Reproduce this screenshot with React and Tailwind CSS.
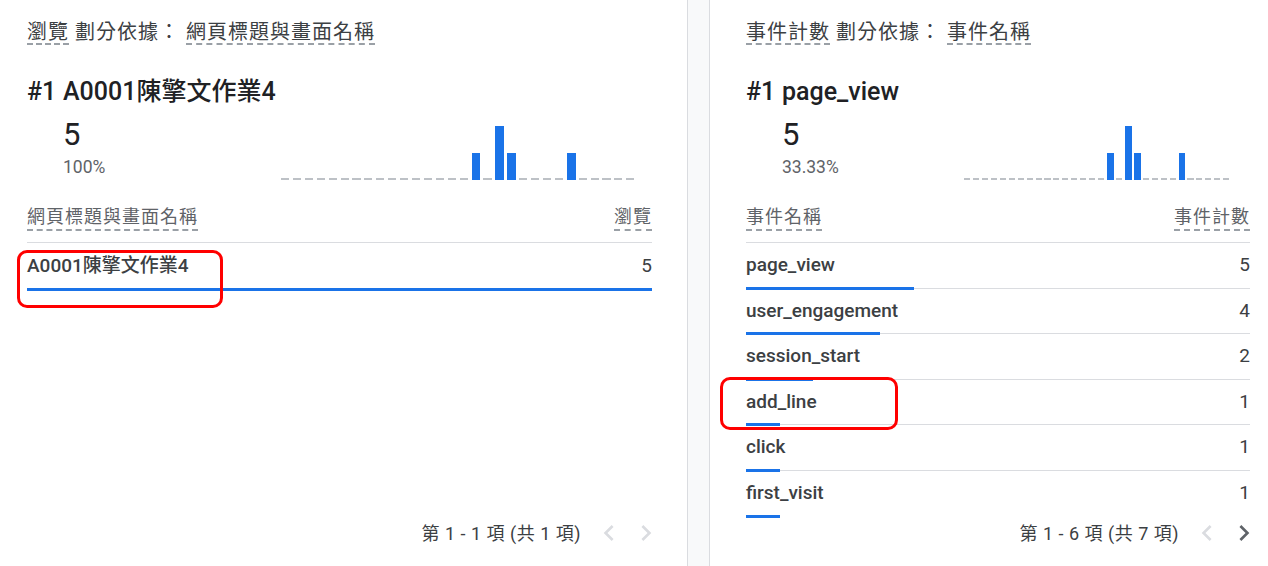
import { Fragment } from "react"

const SLOTS = 30
const bars = { 16: "short", 18: "tall", 19: "short", 24: "short" }

function Chevron({ dir, enabled }) {
  const d =
    dir === "left"
      ? "M15.41 7.41 14 6l-6 6 6 6 1.41-1.41L10.83 12z"
      : "M10 6 8.59 7.41 13.17 12l-4.58 4.59L10 18l6-6z"
  return (
    <div className="flex h-[32px] w-[32px] items-center justify-center">
      <svg width="32" height="32" viewBox="0 0 24 24" className={enabled ? "fill-[#5f6368]" : "fill-[#dadce0]"}>
        <path d={d} />
      </svg>
    </div>
  )
}

function Sparkline({ className }) {
  return (
    <div className={`flex h-[54px] items-end ${className}`}>
      {Array.from({ length: SLOTS }).map((_, i) => (
        <div key={i} className="flex h-full flex-1 items-end">
          {bars[i] === "tall" && <div className="h-[54px] w-[75%] bg-[#1a73e8]" />}
          {bars[i] === "short" && <div className="h-[27px] w-[75%] bg-[#1a73e8]" />}
          {!bars[i] && <div className="h-[2px] w-[68%] bg-[#bdc1c6]" />}
        </div>
      ))}
    </div>
  )
}

function Dashed({ children, className = "" }) {
  return <span className={`inline-block border-b-2 border-dashed border-[#9aa0a6] ${className}`}>{children}</span>
}

function Panel({ metric, dimension, top, topValue, topPct, colHead, rows, total, range, nextEnabled, padClass, numColClass, chartClass }) {
  return (
    <div className={`flex h-[566px] flex-col bg-white ${padClass}`}>
      <div className="pt-[17px] text-[20px] tracking-[1px] text-[#3c4043]">
        <Dashed className="h-[24px] leading-[22px]">{metric}</Dashed>
        <span className="leading-[22px]"> 劃分依據： </span>
        <Dashed className="h-[24px] leading-[22px]">{dimension}</Dashed>
      </div>

      <div className="mt-[30px] flex h-[30px] items-center text-[25px] font-medium leading-[30px] text-[#202124]">
        <span className="w-[36px]">#1</span>
        <span>{top}</span>
      </div>

      <div className="mt-[10px] flex h-[63px] items-end">
        <div className={`ml-[36px] flex h-full flex-col ${numColClass}`}>
          <div className="text-[31px] leading-[36px] text-[#202124]">{topValue}</div>
          <div className="mt-[3px] text-[17.5px] leading-[22px] text-[#5f6368]">{topPct}</div>
        </div>
        <Sparkline className={chartClass} />
      </div>

      <div className="mt-[25px] flex justify-between border-b border-[#dadce0] pb-[11px] text-[18px] tracking-[1px] text-[#5f6368]">
        <Dashed className="h-[26px] leading-[24px]">{colHead[0]}</Dashed>
        <Dashed className="h-[26px] leading-[24px]">{colHead[1]}</Dashed>
      </div>

      {rows.map((r, i) => (
        <Fragment key={r.name}>
          <div
            className={`relative flex h-[45.5px] items-center justify-between text-[19px] text-[#3c4043] ${i < rows.length - 1 ? "border-b border-[#dadce0]" : ""}`}
          >
            <span className="font-medium">{r.name}</span>
            <span>{r.value}</span>
            <div className="absolute bottom-[-2px] left-0 h-[3px] bg-[#1a73e8]" style={{ width: `${(r.value / total) * 100}%` }} />
          </div>
        </Fragment>
      ))}

      <div className="mt-auto -mr-[10px] flex items-center justify-end pb-[17px] text-[18px] tracking-[0.5px] text-[#3c4043]">
        <span>{range}</span>
        <div className="ml-[12px]">
          <Chevron dir="left" enabled={false} />
        </div>
        <div className="ml-[5px]">
          <Chevron dir="right" enabled={nextEnabled} />
        </div>
      </div>
    </div>
  )
}

export default function App() {
  return (
    <div className="relative flex h-[566px] w-[1268px] overflow-hidden bg-white font-['Roboto','Noto_Sans_CJK_TC',sans-serif]">
      <div className="w-[687px] shrink-0">
        <Panel
          metric="瀏覽"
          dimension="網頁標題與畫面名稱"
          top="A0001陳擎文作業4"
          topValue="5"
          topPct="100%"
          colHead={["網頁標題與畫面名稱", "瀏覽"]}
          rows={[{ name: "A0001陳擎文作業4", value: 5 }]}
          total={5}
          range="第 1 - 1 項 (共 1 項)"
          nextEnabled={false}
          padClass="pl-[27px] pr-[35px]"
          numColClass="w-[218px]"
          chartClass="w-[357px]"
        />
      </div>

      <div className="w-[23px] shrink-0 border-x border-[#dadce0] bg-[#f8f9fa]" />

      <div className="flex-1">
        <Panel
          metric="事件計數"
          dimension="事件名稱"
          top="page_view"
          topValue="5"
          topPct="33.33%"
          colHead={["事件名稱", "事件計數"]}
          rows={[
            { name: "page_view", value: 5 },
            { name: "user_engagement", value: 4 },
            { name: "session_start", value: 2 },
            { name: "add_line", value: 1 },
            { name: "click", value: 1 },
            { name: "first_visit", value: 1 },
          ]}
          total={15}
          range="第 1 - 6 項 (共 7 項)"
          nextEnabled={true}
          padClass="pl-[36px] pr-[18px]"
          numColClass="w-[182px]"
          chartClass="w-[268px]"
        />
      </div>

      {/* annotation boxes */}
      <div className="pointer-events-none absolute left-[17px] top-[250px] h-[58px] w-[206px] rounded-[10px] border-[3px] border-[#ff0000]" />
      <div className="pointer-events-none absolute left-[720px] top-[377px] h-[53px] w-[178px] rounded-[10px] border-[3px] border-[#ff0000]" />
    </div>
  )
}
